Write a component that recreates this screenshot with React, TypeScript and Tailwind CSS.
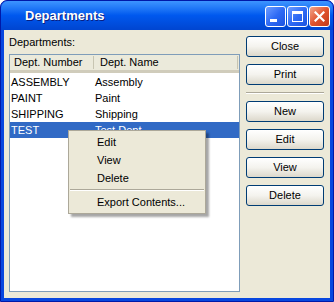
import React from "react";

const rows = [
  { num: "ASSEMBLY", name: "Assembly" },
  { num: "PAINT", name: "Paint" },
  { num: "SHIPPING", name: "Shipping" },
  { num: "TEST", name: "Test Dept", selected: true },
];

function XpButton({ label }: { label: string }) {
  return (
    <div className="flex h-[21px] w-[78px] items-center justify-center rounded-[3px] border border-[#003C74] bg-gradient-to-b from-[#FFFFFF] via-[#F4F3EE] to-[#DCD8CB] text-[11px] text-black">
      {label}
    </div>
  );
}

function TitleButton({ kind }: { kind: "min" | "max" | "close" }) {
  const close = kind === "close";
  return (
    <div
      className={
        close
          ? "flex h-[21px] w-[21px] items-center justify-center rounded-[3px] border border-white bg-gradient-to-br from-[#F0A48A] via-[#E0532D] to-[#C23A1A]"
          : "flex h-[21px] w-[21px] items-center justify-center rounded-[3px] border border-white bg-gradient-to-br from-[#6E9CFF] via-[#2F6BF5] to-[#1A52E0]"
      }
    >
      {kind === "min" && <div className="mt-[8px] mr-[4px] h-[3px] w-[7px] bg-white" />}
      {kind === "max" && <div className="h-[11px] w-[11px] border border-t-[3px] border-white" />}
      {close && (
        <svg width="11" height="11" viewBox="0 0 11 11">
          <path d="M1.5 1.5 L9.5 9.5 M9.5 1.5 L1.5 9.5" stroke="white" strokeWidth="2.2" strokeLinecap="square" />
        </svg>
      )}
    </div>
  );
}

export default function App() {
  return (
    <div
      className="relative h-[302px] w-[334px] overflow-hidden"
      style={{ fontFamily: '"Liberation Sans", Arial, sans-serif' }}
    >
      <div className="flex h-full w-full flex-col rounded-t-[7px] border border-[#0019A8] bg-[#0847DF]">
        {/* title bar */}
        <div className="flex h-[29px] shrink-0 items-center rounded-t-[7px] bg-gradient-to-b from-[#3D95FF] via-[#0058EE] to-[#0045D0] pl-[24px] pr-[3px]">
          <span className="flex-1 text-[13px] font-bold text-white [text-shadow:1px_1px_#0A1E80]">
            Departments
          </span>
          <div className="flex gap-[1px] pt-[1px]">
            <TitleButton kind="min" />
            <TitleButton kind="max" />
            <TitleButton kind="close" />
          </div>
        </div>

        {/* client */}
        <div className="mx-[3px] mb-[3px] flex flex-1 gap-[6px] bg-[#ECE9D8] pb-[6px] pl-[5px] pr-[6px] text-[11px] text-black">
          <div className="flex w-[231px] flex-col">
            <div className="flex h-[24px] items-center">Departments:</div>
            <div className="flex flex-1 flex-col border border-[#7F9DB9] bg-white">
              <div className="flex h-[18px] items-center border-b-[3px] border-[#D0CCBB] bg-[#EBEADB]">
                <div className="flex h-full w-[83px] items-center pl-[4px]">Dept. Number</div>
                <div className="h-[13px] w-px bg-[#C7C5B2]" />
                <div className="flex h-full flex-1 items-center pl-[6px]">Dept. Name</div>
                <div className="mr-[1px] h-[13px] w-px bg-[#C7C5B2]" />
              </div>
              <div className="flex flex-col pt-[1px]">
                {rows.map((r) => (
                  <div
                    key={r.num}
                    className={
                      r.selected
                        ? "flex h-[16px] items-center bg-[#316AC5] text-white"
                        : "flex h-[16px] items-center"
                    }
                  >
                    <span className="w-[85px] pl-[1px]">{r.num}</span>
                    <span>{r.name}</span>
                  </div>
                ))}
              </div>
            </div>
          </div>

          <div className="flex flex-col pt-[6px]">
            <XpButton label="Close" />
            <div className="mt-[7px]">
              <XpButton label="Print" />
            </div>
            <div className="my-[7px] h-[2px] border-t border-b border-t-[#ACA899] border-b-white" />
            <div className="flex flex-col gap-[7px]">
              <XpButton label="New" />
              <XpButton label="Edit" />
              <XpButton label="View" />
              <XpButton label="Delete" />
            </div>
          </div>
        </div>
      </div>

      {/* context menu */}
      <div className="absolute left-[68px] top-[130px] w-[138px] border border-[#ACA899] bg-[#ECE9D8] py-[2px] text-[11px] text-black shadow-[3px_3px_2px_rgba(0,0,0,0.35)]">
        <div className="flex h-[18px] items-center pl-[28px]">Edit</div>
        <div className="flex h-[18px] items-center pl-[28px]">View</div>
        <div className="flex h-[18px] items-center pl-[28px]">Delete</div>
        <div className="mx-[1px] my-[2px] h-[2px] border-t border-b border-t-[#ACA899] border-b-white" />
        <div className="flex h-[18px] items-center pl-[28px]">Export Contents...</div>
      </div>
    </div>
  );
}
